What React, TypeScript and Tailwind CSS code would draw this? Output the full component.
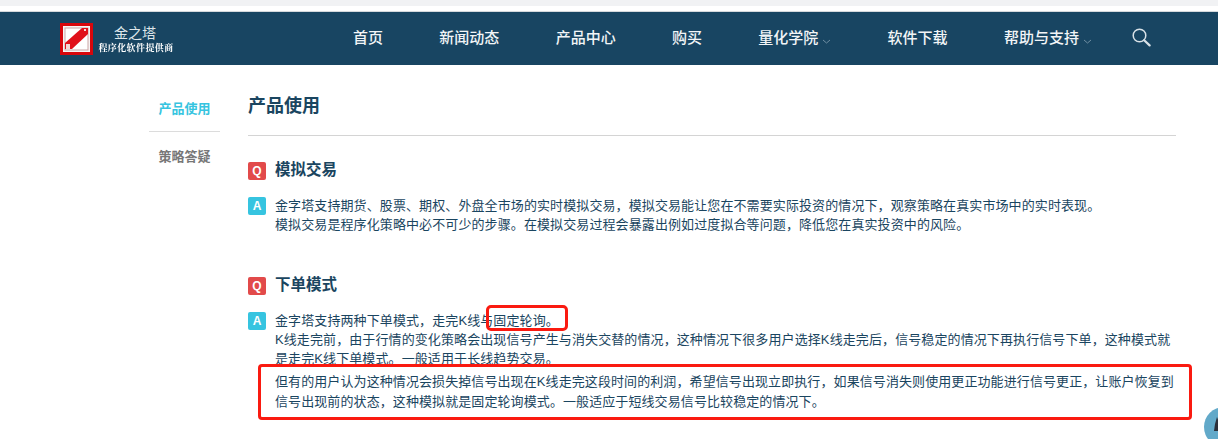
const navItems = [
    { label: '首页' },
    { label: '新闻动态' },
    { label: '产品中心' },
    { label: '购买' },
    { label: '量化学院', caret: true },
    { label: '软件下载' },
    { label: '帮助与支持', caret: true },
];

function Logo() {
    return (
        <svg width="33" height="32" viewBox="0 0 33 32" className="shrink-0">
            <rect width="33" height="32" fill="#d8060c" />
            <rect x="3" y="3" width="27" height="26" fill="#f7f3f3" />
            <rect x="5" y="5" width="23" height="22" fill="#ffffff" stroke="#c9a5a5" strokeWidth="1" />
            <path d="M5 20 L22 5 L28 5 L28 11 L12 26 L5 26 Z" fill="#e0101a" />
            <rect x="6" y="21" width="4" height="5" fill="#f4d7d7" />
            <rect x="24" y="6" width="2" height="2" fill="#f4d7d7" />
        </svg>
    );
}

function Caret() {
    return (
        <svg width="9" height="5" viewBox="0 0 9 5" className="ml-[4px] mt-[5px]">
            <path d="M1 1 L4.5 4 L8 1" fill="none" stroke="#6f8ea2" strokeWidth="1" />
        </svg>
    );
}

function SearchIcon() {
    return (
        <svg width="19" height="19" viewBox="0 0 19 19" className="ml-[40px] mb-[2px]">
            <circle cx="7.5" cy="7.5" r="6.3" fill="none" stroke="#d8e1e7" strokeWidth="1.5" />
            <path d="M12.2 12.2 L17.6 17.4" fill="none" stroke="#d8e1e7" strokeWidth="2.2" strokeLinecap="round" />
        </svg>
    );
}

function Badge({ kind }: { kind: 'Q' | 'A' }) {
    return (
        <div className={`mt-px flex h-[18px] w-[18px] shrink-0 items-center justify-center rounded-[2px] text-[12px] font-bold text-white ${kind === 'Q' ? 'bg-[#e24a4a]' : 'bg-[#36c4e0]'}`}>
            {kind}
        </div>
    );
}

export default function App() {
    return (
        <div className="relative h-[439px] w-[1218px] overflow-hidden bg-white font-['Liberation_Sans','Noto_Sans_CJK_SC',sans-serif] text-[#1a4560]">
            {/* browser strip above the site */}
            <div className="h-[6px] bg-[#f1f2f4]" />
            <div className="h-[5px] bg-white" />
            <div className="h-px bg-[#d5d9dc]" />

            {/* Header */}
            <header className="flex h-[53px] items-center bg-[#184562] pl-[60px]">
                <Logo />
                <div className="ml-[6px] flex w-[74px] flex-col items-center text-white">
                    <div className="-translate-x-px text-[14px] leading-[17px] text-[#dfe6ea]">金之塔</div>
                    <div className="whitespace-nowrap text-[9px] font-bold leading-[11px] tracking-[0.4px] blur-[0.3px] font-['Noto_Serif_CJK_SC','Noto_Sans_CJK_SC',serif]">程序化软件提供商</div>
                </div>
                <nav className="ml-[180px] flex items-center gap-[56.3px] text-[15px] font-medium text-[#f2f5f7]">
                    {navItems.map((item) => (
                        <div key={item.label} className="flex items-center whitespace-nowrap">
                            {item.label}
                            {item.caret && <Caret />}
                        </div>
                    ))}
                </nav>
                <SearchIcon />
            </header>

            {/* Body */}
            <div className="flex pl-[149px] pt-[29px]">
                <aside className="w-[71px] shrink-0 text-center text-[13px] font-bold">
                    <div className="h-[38px] border-b border-[#dcdcdc] pt-px leading-[28px] text-[#36c4e0]">产品使用</div>
                    <div className="mt-[11px] leading-[28px] text-[#777777]">策略答疑</div>
                </aside>

                <main className="ml-[28px] w-[928px]">
                    <h1 className="h-[42px] border-b border-[#d4d4d4] text-[18px] font-bold leading-[25px] text-[#1a4560]">产品使用</h1>

                    <section className="mt-[24px]">
                        <div className="flex items-center gap-[9px]">
                            <Badge kind="Q" />
                            <h2 className="text-[15.5px] font-bold leading-[20px]">模拟交易</h2>
                        </div>
                        <div className="mt-[16px] flex gap-[9px]">
                            <Badge kind="A" />
                            <p className="text-[13px] leading-[19px] tracking-[0.1px]">
                                金字塔支持期货、股票、期权、外盘全市场的实时模拟交易，模拟交易能让您在不需要实际投资的情况下，观察策略在真实市场中的实时表现。
                                <br />
                                模拟交易是程序化策略中必不可少的步骤。在模拟交易过程会暴露出例如过度拟合等问题，降低您在真实投资中的风险。
                            </p>
                        </div>
                    </section>

                    <section className="mt-[41px]">
                        <div className="flex items-center gap-[9px]">
                            <Badge kind="Q" />
                            <h2 className="text-[15.5px] font-bold leading-[20px]">下单模式</h2>
                        </div>
                        <div className="mt-[16px] flex gap-[9px]">
                            <Badge kind="A" />
                            <p className="text-[13px] leading-[19px] tracking-[0.1px]">
                                金字塔支持两种下单模式，走完K线与固定轮询。
                                <br />
                                K线走完前，由于行情的变化策略会出现信号产生与消失交替的情况，这种情况下很多用户选择K线走完后，信号稳定的情况下再执行信号下单，这种模式就是走完K线下单模式。一般适用于长线趋势交易。
                            </p>
                        </div>
                    </section>
                </main>
            </div>

            {/* Red annotation boxes pasted over the page */}
            <div className="absolute left-[486px] top-[305px] h-[26px] w-[82px] rounded-[5px] border-[3px] border-[#fa1a10]" />
            <div className="absolute left-[258px] top-[364px] h-[56px] w-[934px] rounded-[4px] border-[3px] border-[#fa1a10] bg-white pl-[14px] pt-[5px] text-[13px] leading-[20px] tracking-[0.09px] text-[#1a4560]">
                但有的用户认为这种情况会损失掉信号出现在K线走完这段时间的利润，希望信号出现立即执行，如果信号消失则使用更正功能进行信号更正，让账户恢复到
                <br />
                信号出现前的状态，这种模拟就是固定轮询模式。一般适应于短线交易信号比较稳定的情况下。
            </div>

            {/* Floating round button, cut off by the window */}
            <div className="absolute left-[1204px] top-[407px] flex h-[40px] w-[40px] items-start rounded-full bg-[#62a9c9] pl-[10px] pt-[10px]">
                <svg width="6" height="14" viewBox="0 0 6 14">
                    <path d="M3 0 L6 8 L5 14 L0 14 L1 7 Z" fill="#2b2f3a" />
                </svg>
            </div>
        </div>
    );
}
